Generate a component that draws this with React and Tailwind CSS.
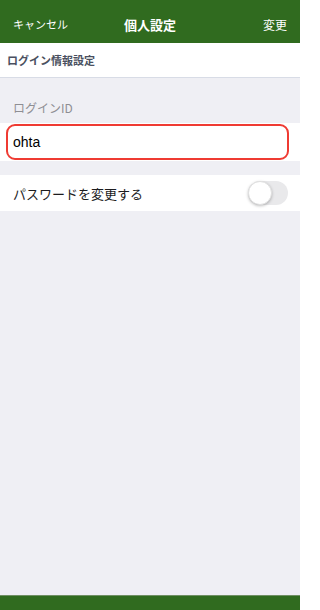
import React, { useState } from 'react';

const jp = { fontFamily: '"Noto Sans CJK JP", "Noto Sans", sans-serif' };

const Toggle = ({ on, onChange }) => (
    <button
        onClick={() => onChange(!on)}
        className={`relative w-[40px] h-[24px] rounded-full ${on ? 'bg-[#306b1f]' : 'bg-[#e9e9eb]'}`}
    >
        <span
            className={`absolute top-0 w-[24px] h-[24px] rounded-full bg-white shadow-[0_1px_3px_rgba(0,0,0,0.25)] border border-[#e0e0e0] ${
                on ? 'left-[16px]' : 'left-0'
            }`}
        />
    </button>
);

const App = () => {
    const [loginId, setLoginId] = useState('ohta');
    const [changePw, setChangePw] = useState(false);

    return (
        <div style={jp} className="w-[300px] h-[610px] flex flex-col bg-[#efeff4] leading-none">
            <div className="h-[43px] bg-[#306b1f] flex items-center justify-between px-[13px] pt-[6px] text-white">
                <span className="text-[11px] w-[60px]">キャンセル</span>
                <span className="text-[13px] font-bold">個人設定</span>
                <span className="text-[12px] w-[60px] text-right">変更</span>
            </div>

            <div className="h-[35px] bg-white border-b border-[#d8dce6] flex items-center px-[7px]">
                <span className="text-[11px] font-semibold text-[#4a5060]">ログイン情報設定</span>
            </div>

            <div className="h-[45px] flex items-end px-[13px] pb-[9px]">
                <span className="text-[12px] leading-[12px] text-[#8e8e93]">ログインID</span>
            </div>
            <div className="bg-white px-[6px] py-[1px]">
                <input
                    value={loginId}
                    onChange={e => setLoginId(e.target.value)}
                    className="block w-[283px] h-[36px] border-2 border-[#ef3b33] rounded-[9px] px-[5px] text-[14px] text-black outline-none"
                    style={{ fontFamily: '"Liberation Sans", "Noto Sans CJK JP", sans-serif' }}
                />
            </div>

            <div className="mt-[14px] h-[36px] bg-white flex items-center justify-between pl-[13px] pr-[12px]">
                <span className="text-[13px] text-[#1c1c1e]">パスワードを変更する</span>
                <Toggle on={changePw} onChange={setChangePw} />
            </div>

            <div className="flex-1" />

            <div className="h-[15px] bg-[#306b1f] border-t border-[#6f8f63]" />
        </div>
    );
};

export default App;
